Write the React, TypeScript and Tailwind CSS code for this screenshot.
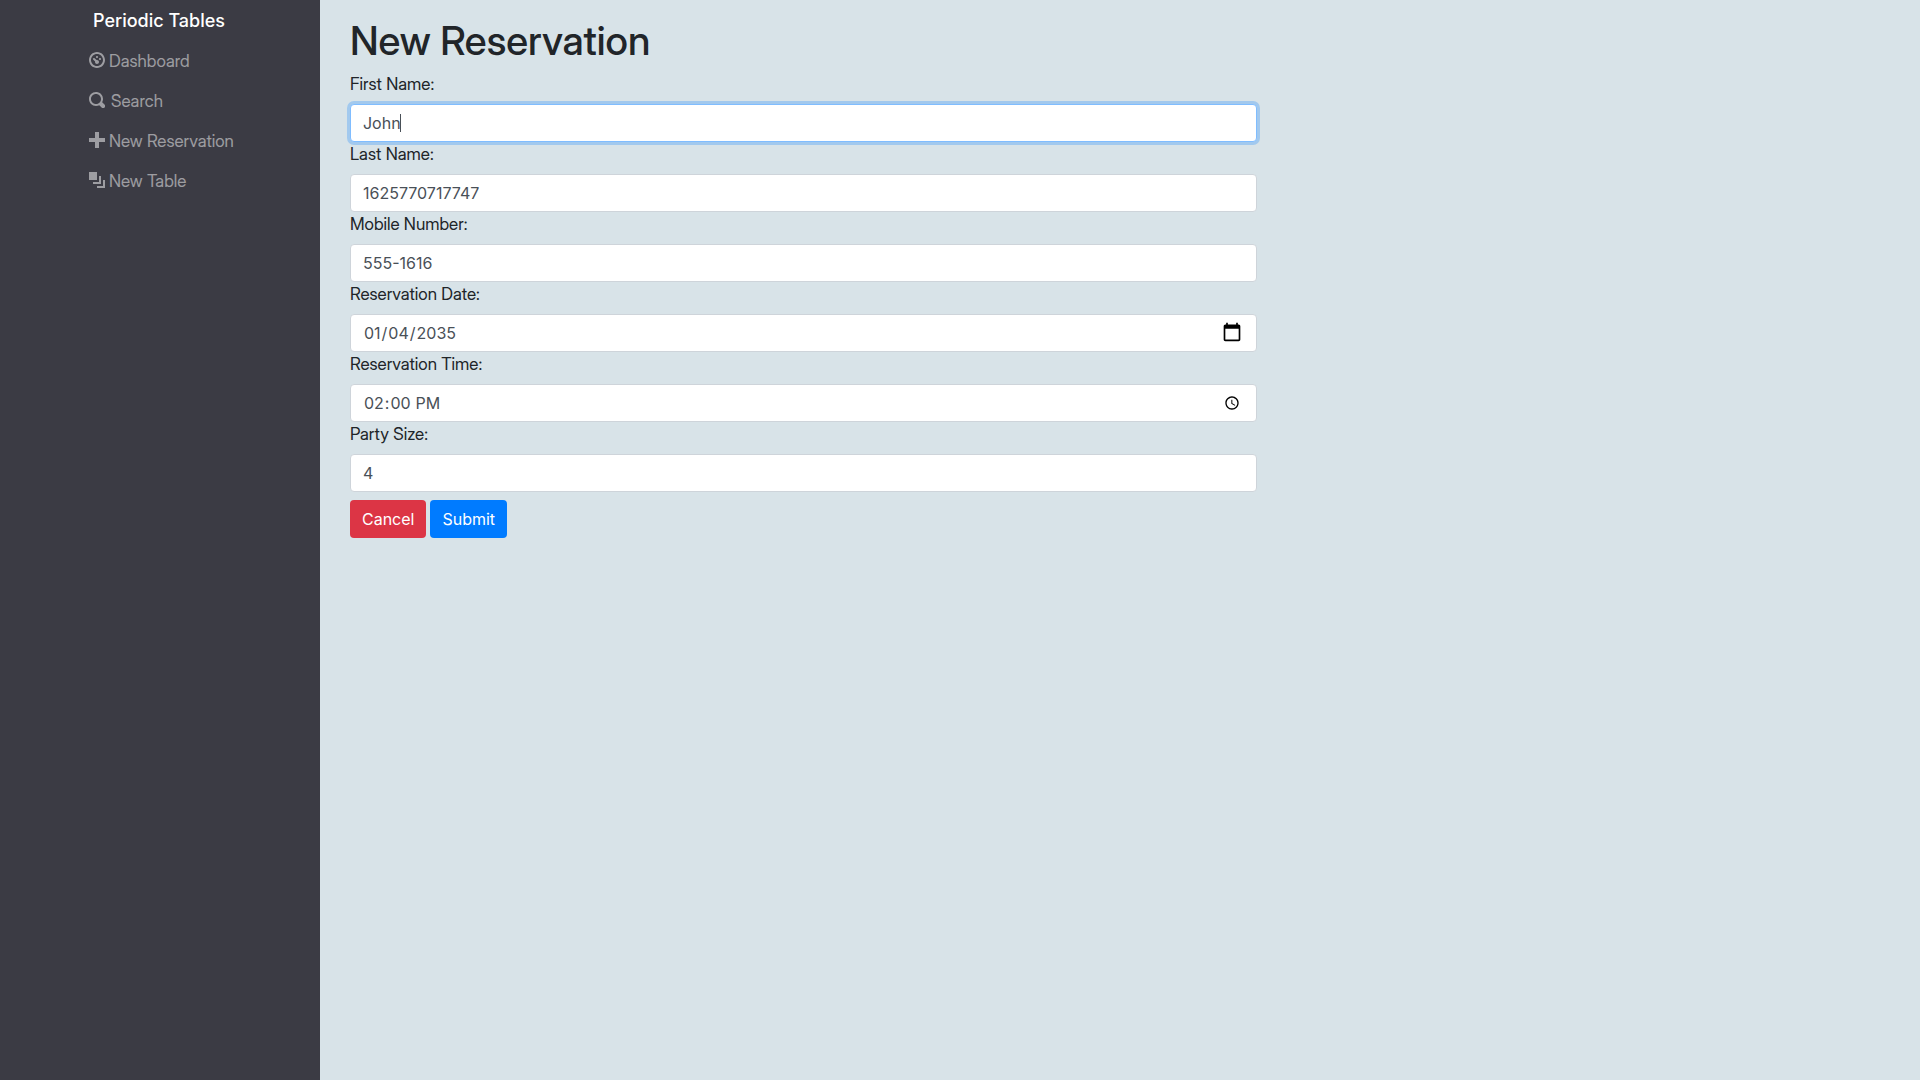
import type { InputHTMLAttributes, ReactNode } from "react";

const icons = {
  dashboard:
    "M4 0c-2.2 0-4 1.8-4 4s1.8 4 4 4 4-1.8 4-4-1.8-4-4-4zm0 1c1.66 0 3 1.34 3 3s-1.34 3-3 3-3-1.34-3-3 1.34-3 3-3zm0 1c-.28 0-.5.22-.5.5s.22.5.5.5.5-.22.5-.5-.22-.5-.5-.5zm-1.66 1a.5.5 0 0 0-.19.84l.91.91c-.02.08-.06.16-.06.25 0 .55.45 1 1 1s1-.45 1-1-.45-1-1-1c-.09 0-.17.04-.25.06l-.91-.91a.5.5 0 0 0-.44-.16.5.5 0 0 0-.06 0zm3.16 0c-.28 0-.5.22-.5.5s.22.5.5.5.5-.22.5-.5-.22-.5-.5-.5z",
  search:
    "M3.5 0c-1.93 0-3.5 1.57-3.5 3.5s1.57 3.5 3.5 3.5c.59 0 1.17-.14 1.66-.41a1 1 0 0 0 .13.13l1 1a1.02 1.02 0 1 0 1.44-1.44l-1-1a1 1 0 0 0-.16-.13c.27-.49.44-1.06.44-1.66 0-1.93-1.55-3.5-3.5-3.5zm0 1c1.39 0 2.5 1.11 2.5 2.5 0 .66-.24 1.27-.66 1.72-.01.01-.02.02-.03.03a1 1 0 0 0-.13.13c-.44.4-1.04.63-1.69.63-1.39 0-2.5-1.11-2.5-2.5s1.11-2.5 2.5-2.5z",
  plus: "M3 0v3h-3v2h3v3h2v-3h3v-2h-3v-3h-2z",
  layers: "M0 0v4h4v-4h-4zm5 2v3h-3v1h4v-4h-1zm2 2v3h-3v1h4v-4h-1z",
};

function NavLink({ icon, label, gap = "gap-1" }: { icon: keyof typeof icons; label: string; gap?: string }) {
  return (
    <li>
      <a
        href="#"
        className={`flex items-center py-2 font-['Inter_Display',Inter,sans-serif] text-[17px] leading-6 text-white/50 hover:text-white/75 ${gap}`}
      >
        <svg viewBox="0 0 8 8" className="mb-0.5 size-4 shrink-0 fill-current" aria-hidden="true">
          <path d={icons[icon]} />
        </svg>
        {label}
      </a>
    </li>
  );
}

type FieldProps = { id: string; label: string; children?: ReactNode } & InputHTMLAttributes<HTMLInputElement>;

function Field({ id, label, children, ...rest }: FieldProps) {
  return (
    <div>
      <label htmlFor={id} className="mb-2 block font-['Inter_Display',Inter,sans-serif] text-[17px] leading-6">
        {label}
      </label>
      <div className="relative">
        <input
          id={id}
          name={id}
          className="block h-[38px] w-full rounded border border-[#ced4da] bg-white px-3 py-1.5 leading-6 text-[#495057] outline-none focus:border-[#80bdff] focus:ring-3 focus:ring-[#007bff]/25 [&[type=date]::-webkit-calendar-picker-indicator]:opacity-0"
          {...rest}
        />
        {children}
      </div>
    </div>
  );
}

export default function App() {
  return (
    <div className="flex min-h-screen bg-[#d8e3e8] font-['Inter',sans-serif] text-base text-[#212529]">
      <nav className="w-1/6 shrink-0 bg-[#3b3b44]">
        <div className="mx-auto w-[142px] whitespace-nowrap">
          <a href="#" className="block px-1 pt-[9px] pb-1 text-lg leading-6 font-medium text-white">
            Periodic Tables
          </a>
          <ul className="mt-1">
            <NavLink icon="dashboard" label="Dashboard" />
            <NavLink icon="search" label="Search" gap="gap-1.5" />
            <NavLink icon="plus" label="New Reservation" />
            <NavLink icon="layers" label="New Table" />
          </ul>
        </div>
      </nav>
      <main className="grow px-[30px] pt-[17px]">
        <h1 className="mb-[7px] font-['Inter_Display',Inter,sans-serif] text-[40px] leading-12 font-medium">
          New Reservation
        </h1>
        <form className="w-[58.9%]" onSubmit={(e) => e.preventDefault()}>
          <Field id="first_name" label="First Name:" type="text" defaultValue="John" autoFocus>
            <span className="pointer-events-none absolute top-[10px] left-[50px] h-[18px] w-px bg-[#495057]" />
          </Field>
          <Field id="last_name" label="Last Name:" type="text" defaultValue="1625770717747" />
          <Field id="mobile_number" label="Mobile Number:" type="tel" defaultValue="555-1616" />
          <Field id="reservation_date" label="Reservation Date:" type="date" defaultValue="2035-01-04">
            <svg
              viewBox="0 0 24 24"
              className="pointer-events-none absolute top-[8px] right-[15px] size-5 fill-black"
              aria-hidden="true"
            >
              <path d="M20 3h-1V1h-2v2H7V1H5v2H4c-1.1 0-2 .9-2 2v16c0 1.1.9 2 2 2h16c1.1 0 2-.9 2-2V5c0-1.1-.9-2-2-2zm0 18H4V8h16v13z" />
            </svg>
          </Field>
          <Field id="reservation_time" label="Reservation Time:" type="time" defaultValue="14:00" />
          <Field id="people" label="Party Size:" type="text" inputMode="numeric" defaultValue="4" />
          <div className="mt-2 flex gap-1">
            <button type="button" className="h-[38px] rounded bg-[#dc3545] px-3 leading-6 text-white">
              Cancel
            </button>
            <button type="submit" className="h-[38px] rounded bg-[#007bff] px-3 leading-6 text-white">
              Submit
            </button>
          </div>
        </form>
      </main>
    </div>
  );
}
